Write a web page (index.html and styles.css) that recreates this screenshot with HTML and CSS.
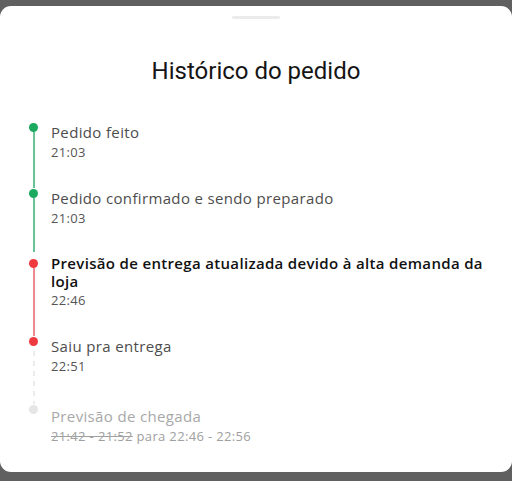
FILE: index.html
```
<!DOCTYPE html>
<html lang="pt-BR">
<head>
<meta charset="utf-8">
<link rel="stylesheet" href="styles.css">
</head>
<body>
<div class="sheet">
  <div class="handle"></div>
  <h1 class="title">Histórico do pedido</h1>
  <ol class="timeline">
    <li class="item item--done">
      <div class="rail"><span class="dot"></span><span class="line"></span></div>
      <div class="body">
        <div class="label">Pedido feito</div>
        <div class="time">21:03</div>
      </div>
    </li>
    <li class="item item--done item--end">
      <div class="rail"><span class="dot"></span><span class="line"></span></div>
      <div class="body">
        <div class="label">Pedido confirmado e sendo preparado</div>
        <div class="time">21:03</div>
      </div>
    </li>
    <li class="item item--alert item--strong">
      <div class="rail"><span class="dot"></span><span class="line"></span></div>
      <div class="body">
        <div class="label">Previsão de entrega atualizada devido à alta demanda da loja</div>
        <div class="time">22:46</div>
      </div>
    </li>
    <li class="item item--alert item--pending">
      <div class="rail"><span class="dot"></span><span class="line"></span></div>
      <div class="body">
        <div class="label">Saiu pra entrega</div>
        <div class="time">22:51</div>
      </div>
    </li>
    <li class="item item--future">
      <div class="rail"><span class="dot"></span></div>
      <div class="body">
        <div class="label">Previsão de chegada</div>
        <div class="time"><s>21:42 - 21:52</s> para 22:46 - 22:56</div>
      </div>
    </li>
  </ol>
</div>
</body>
</html>
```
FILE: styles.css
```
* { box-sizing: border-box; }
html, body { margin: 0; padding: 0; }
body {
  background: #606060;
  width: 512px;
  height: 481px;
  overflow: hidden;
  font-family: "Open Sans", "Noto Sans", sans-serif;
}
.sheet {
  margin-top: 6px;
  height: 466px;
  background: #fff;
  border-radius: 11px;
  overflow: hidden;
  display: flex;
  flex-direction: column;
}
.handle {
  align-self: center;
  width: 48px;
  height: 4px;
  border-radius: 2px;
  background: #ebebeb;
  margin-top: 10px;
}
.title {
  margin: 38px 0 0;
  text-align: center;
  font-family: Roboto, "Liberation Sans", sans-serif;
  font-size: 24px;
  line-height: 28px;
  font-weight: 400;
  color: #151515;
}
.timeline {
  list-style: none;
  margin: 37px 0 0;
  padding: 0 20px 0 28px;
}
.item {
  display: flex;
  gap: 12px;
}
.rail {
  width: 11px;
  display: flex;
  flex-direction: column;
  align-items: center;
  flex: none;
}
.dot {
  width: 9px;
  height: 9px;
  border-radius: 50%;
  flex: none;
  margin-top: 1px;
}
.line {
  flex: 1;
  width: 2px;
}
.body {
  flex: 1;
  padding-bottom: 26px;
}
.label {
  font-size: 15px;
  line-height: 20px;
  letter-spacing: 0.35px;
  color: #4d4d4d;
}
.time {
  font-size: 13px;
  line-height: 20px;
  letter-spacing: 0.35px;
  color: #555;
}
.item--done .dot { background: #1ba85f; }
.item--done .line { background: #68c495; }
.item--end .body { padding-bottom: 24px; }
.item--alert .dot { background: #ee3a3f; }
.item--alert .line { background: #ec8a90; }
.item--strong .dot { margin-top: 7px; }
.item--strong .body { padding-top: 2px; }
.item--strong .label {
  color: #111;
  font-weight: 600;
  letter-spacing: 0.33px;
  line-height: 18px;
}
.item--pending .body { padding-bottom: 28px; }
.item--pending .line {
  background: repeating-linear-gradient(to bottom, transparent 0 5px, #ececec 5px 10px);
}
.item--future .dot { background: #e6e6e6; }
.item--future .body { padding-top: 2px; }
.item--future .label { color: #a8a8a8; }
.item--future .time { color: #a0a0a0; }
.item--future s { text-decoration-thickness: 1px; }
```
